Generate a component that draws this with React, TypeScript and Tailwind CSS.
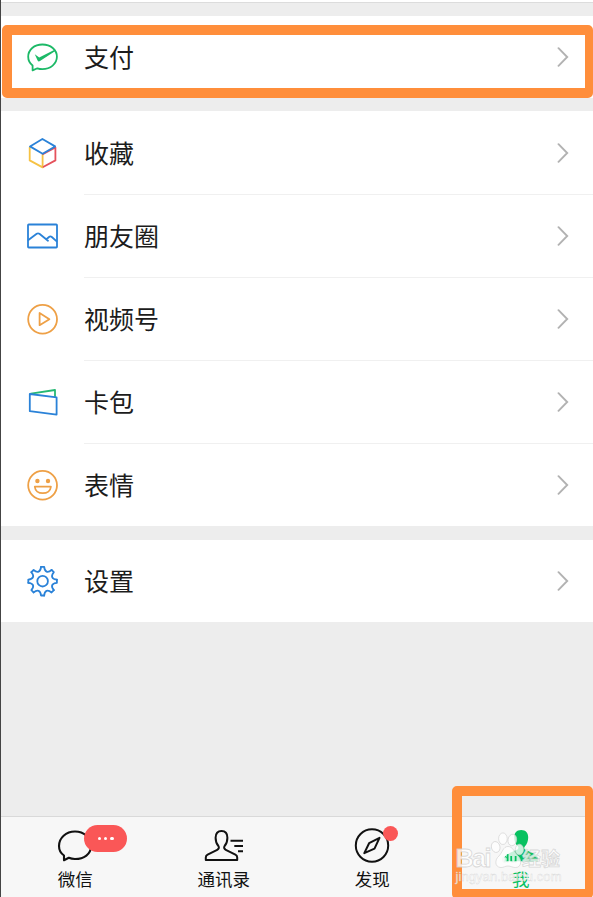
import React from "react";

const BLUE = "#2a82d8";
const ORANGE = "#eea046";

interface RowProps {
    label: string;
    icon: React.ReactNode;
    divider?: boolean;
}

function Svg({children}: { children: React.ReactNode }) {
    return (
        <svg width="34" height="34" viewBox="0 0 34 34" fill="none" strokeWidth="1.8" strokeLinejoin="round" strokeLinecap="round">
            <g transform="translate(0.4 0.2)">{children}</g>
        </svg>
    );
}

const PayIcon = () => (
    <Svg>
        <g transform="translate(0 -0.4)">
            <path d="M7.2 25.7C4.2 23.5 2.8 20.4 2.8 17C2.8 10 8.8 4.7 17 4.7S31.5 10 31.5 17S25 29.3 17 29.3C15.2 29.3 13.5 29 12 28.5L7.2 30.6Z" stroke="#1cb967"/>
            <path d="M9.4 14.4L13.8 17.6L29.7 9.7L30.3 11L14.6 21.2Q13 22.2 12.2 20.6Z" fill="#1cb967"/>
        </g>
    </Svg>
);

const FavoriteIcon = () => (
    <Svg>
        <path d="M4.3 11.2V24.2L17.2 31.2V18.2" stroke="#f6c244"/>
        <path d="M17.8 17.8L30 11.2V24.2L18.2 30.6" stroke="#e5525c"/>
        <path d="M4.6 10.2L17 2.8L29.7 10.2L17.2 17.6Z" stroke={BLUE}/>
    </Svg>
);

const MomentsIcon = () => (
    <Svg>
        <rect x="2.6" y="5.3" width="29" height="23" rx="0.8" stroke={BLUE}/>
        <path d="M3 20.8L11.3 14.6Q12.6 13.6 14 14.6L22.6 21.6M21 20L23.6 17.8Q25 16.6 26.4 17.8L31 22" stroke={BLUE}/>
    </Svg>
);

const ChannelsIcon = () => (
    <Svg>
        <circle cx="17.2" cy="17" r="14.4" stroke={ORANGE}/>
        <path d="M14.2 10.8V23L24 17Z" stroke={ORANGE}/>
    </Svg>
);

const CardsIcon = () => (
    <Svg>
        <path d="M5.5 8.4L29.6 4.8V11" stroke="#25b873"/>
        <path d="M4.4 8.8L31.2 12.2V29.4L4.4 26Z" stroke={BLUE}/>
    </Svg>
);

const StickerIcon = () => (
    <Svg>
        <circle cx="17.2" cy="17" r="14.4" stroke={ORANGE}/>
        <circle cx="12" cy="12.8" r="2.2" fill={ORANGE}/>
        <circle cx="22.6" cy="12.8" r="2.2" fill={ORANGE}/>
        <path d="M9.4 18.5H25.5C25.2 22.5 21.7 25 17.4 25S9.7 22.5 9.4 18.5Z" stroke={ORANGE}/>
    </Svg>
);

// one tooth plus the valley after it, repeated round the hub
const SettingsIcon = () => (
    <Svg>
        <g transform="translate(17.2 17)" stroke={BLUE}>
            <circle r="5.3"/>
            {[0, 45, 90, 135, 180, 225, 270, 315].map((angle) => (
                <path key={angle} transform={`rotate(${angle})`} d="M-1.6 -14.3H1.6C2 -9.2 5.1 -7.9 8.98 -11.24"/>
            ))}
        </g>
    </Svg>
);

function Row({label, icon, divider}: RowProps) {
    return (
        <div className="flex h-[83px] items-center bg-white pl-6">
            {icon}
            <div className={`ml-[25px] flex h-full flex-1 items-center justify-between border-t pr-6 ${divider ? "border-[#f0f0f0]" : "border-transparent"}`}>
                <span className="pb-0.5 text-[25px] leading-none text-[#1c1c1c]">{label}</span>
                <svg width="12" height="20" viewBox="0 0 12 20" fill="none" stroke="#b2b2b2" strokeWidth="1.9" strokeLinecap="round">
                    <path d="M1.5 1.2L10.2 10L1.5 18.8"/>
                </svg>
            </div>
        </div>
    );
}

interface TabProps {
    label: string;
    active?: boolean;
    children: React.ReactNode;
}

function Tab({label, active, children}: TabProps) {
    return (
        <div className={`flex flex-1 flex-col items-center pt-[9px] ${active ? "text-[#07c160]" : "text-[#111]"}`}>
            <div className="relative h-10 w-10">{children}</div>
            <span className="mt-1 text-[17.5px] leading-[18px]">{label}</span>
        </div>
    );
}

// translucent logo lying over the last tab
function Watermark() {
    return (
        <div className="absolute bottom-2 left-[453px] h-[58px] w-[110px]">
            <svg width="110" height="58" viewBox="0 0 110 58" fill="#fff" fillOpacity="0.78" stroke="#cfcfcf" strokeWidth="0.8" strokeOpacity="0.8">
                <mask id="pad">
                    <rect width="110" height="58" fill="#fff" fillOpacity="1" stroke="none"/>
                    <text x="47.5" y="32" fontFamily="Liberation Sans" fontWeight="700" fontSize="13" fill="#000" fillOpacity="1" stroke="none">du</text>
                </mask>
                <ellipse cx="41.7" cy="16" rx="4.3" ry="5.5" transform="rotate(-14 41.7 16)"/>
                <ellipse cx="48.9" cy="7.7" rx="4.3" ry="5.8"/>
                <ellipse cx="58.3" cy="9" rx="4.3" ry="5.8" transform="rotate(10 58.3 9)"/>
                <ellipse cx="65.4" cy="18.5" rx="4.1" ry="5.3"/>
                <path mask="url(#pad)" d="M54 15.5C59 15.5 60 21 63.5 24.5C68 28 68 36.5 61.5 36.5C58 36.5 57 35 54 35S50 36.5 47 36.5C40.5 36.5 40.5 28.5 45 25C48.5 21.5 49 15.5 54 15.5Z"/>
                <text x="1.5" y="35.5" fontFamily="Liberation Sans" fontWeight="700" fontSize="25.5" textLength="36">Bai</text>
                <text x="68" y="35" fontFamily="Noto Sans CJK SC" fontWeight="700" fontSize="19" textLength="38">经验</text>
                <text x="1.5" y="50" fontFamily="Liberation Sans" fontSize="13" strokeWidth="0.4" textLength="106">jingyan.baidu.com</text>
            </svg>
        </div>
    );
}

export default function App() {
    return (
        <div className="relative flex h-[897px] w-[593px] flex-col overflow-hidden border-l border-[#444] bg-[#ededed] font-['Noto_Sans_CJK_SC',sans-serif]">
            <div className="h-[3px] shrink-0 border-b border-[#dcdcdc] bg-white"/>
            <div className="-mb-px mt-[13px] h-[82px] overflow-hidden">
                <div className="-mt-px"><Row label="支付" icon={<PayIcon/>}/></div>
            </div>
            <div className="mt-3.5">
                <Row label="收藏" icon={<FavoriteIcon/>}/>
                <Row label="朋友圈" icon={<MomentsIcon/>} divider/>
                <Row label="视频号" icon={<ChannelsIcon/>} divider/>
                <Row label="卡包" icon={<CardsIcon/>} divider/>
                <Row label="表情" icon={<StickerIcon/>} divider/>
            </div>
            <div className="mt-3.5 h-[82px] overflow-hidden">
                <div className="-mt-px"><Row label="设置" icon={<SettingsIcon/>}/></div>
            </div>

            <div className="-mr-0.5 mt-auto flex h-[81px] border-t border-[#d9d9d9] bg-[#f7f7f7]">
                <Tab label="微信">
                    <svg width="40" height="40" viewBox="0 0 40 40" fill="none" stroke="currentColor" strokeWidth="2.1" strokeLinejoin="round">
                        <path d="M9 29.5C5.6 27.2 4 23.8 4 20C4 11.8 11 5.5 20 5.5S36 11.8 36 20S29 33 20 33C17.8 33 15.6 32.6 13.8 31.8L9 34.2Z"/>
                    </svg>
                    <div className="absolute -top-px left-[29px] flex h-[27px] w-[43px] items-center justify-center gap-[3px] rounded-full bg-[#fa5757]">
                        <i className="size-[3.4px] rounded-full bg-white"/>
                        <i className="size-[3.4px] rounded-full bg-white"/>
                        <i className="size-[3.4px] rounded-full bg-white"/>
                    </div>
                </Tab>
                <Tab label="通讯录">
                    <svg width="40" height="40" viewBox="0 0 40 40" fill="none" stroke="currentColor" strokeWidth="2" strokeLinejoin="round">
                        <path d="M14.4 20C12.4 17.7 11.6 14.8 11.6 11.7C11.6 7.4 13.7 5 17.5 5S23.4 7.4 23.4 11.7C23.4 14.8 22.6 17.7 20.6 20C19.6 21.4 20.2 23 21.8 23.8L31.4 28.6Q33.2 29.6 33.2 31.5V34H1.8V31.5Q1.8 29.6 3.6 28.6L13.2 23.8C14.8 23 15.4 21.4 14.4 20Z"/>
                        <path d="M26.5 14.7H39M30.3 20H39M34 25.2H39"/>
                    </svg>
                </Tab>
                <Tab label="发现">
                    <svg width="40" height="40" viewBox="0 0 40 40" fill="none" stroke="currentColor" strokeWidth="2" strokeLinejoin="round">
                        <circle cx="20" cy="19.5" r="16.2"/>
                        <path d="M27.5 11.9L22.5 22.7L12.3 27.1L17.1 17.2Z"/>
                    </svg>
                    <div className="absolute left-[30.5px] top-0 size-[15px] rounded-full bg-[#fa5757]"/>
                </Tab>
                <Tab label="我" active>
                    <svg width="40" height="40" viewBox="0 0 40 40" fill="currentColor">
                        <path d="M17 20.4C14.2 18 13.2 14.8 13.2 11.2C13.2 6.8 15.8 4 20.2 4S27.2 6.8 27.2 11.2C27.2 14.8 26.2 18 23.8 20.4C22.8 21.8 23 23 24.6 23.8L34.6 28.4Q36.8 29.6 36.8 31.8V35.2H3.6V31.8Q3.6 29.6 5.8 28.4L15.8 23.8C17.4 23 17.8 21.8 17 20.4Z"/>
                    </svg>
                </Tab>
            </div>

            <div className="absolute left-px top-[25px] h-[73px] w-[591px] rounded-[5px] border-[10px] border-r-8 border-[#ff8e3b]"/>
            <div className="absolute left-[451px] top-[786px] h-[113px] w-[141px] rounded-[5px] border-[10px] border-r-8 border-[#ff8e3b]"/>
            <Watermark/>
        </div>
    );
}
